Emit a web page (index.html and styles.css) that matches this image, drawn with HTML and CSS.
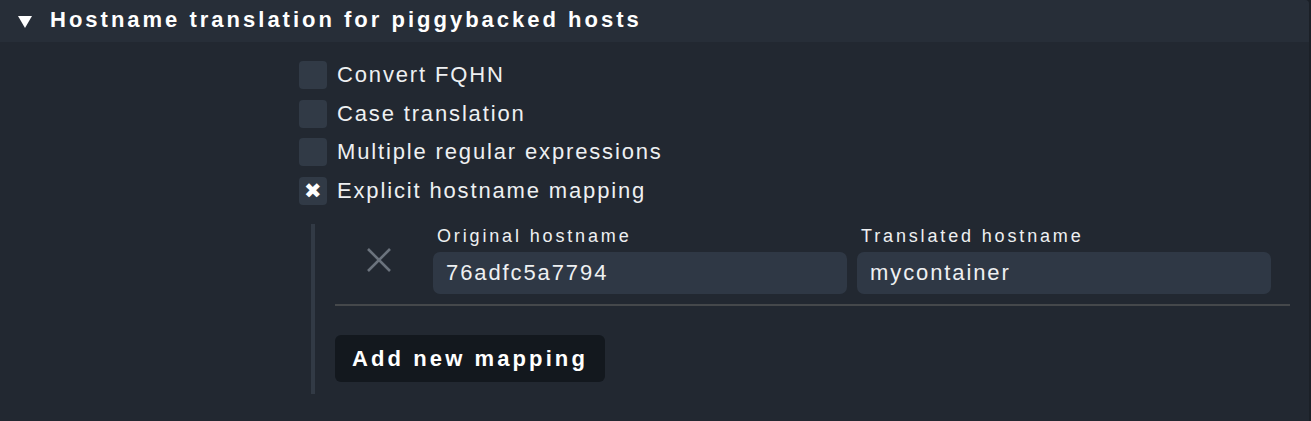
FILE: index.html
```html
<!DOCTYPE html>
<html lang="en">
<head>
    <meta charset="utf-8">
    <title>Hostname translation</title>
    <link rel="stylesheet" href="styles.css">
</head>
<body>

    <div class="panel">
        <div class="panel-head">
            <span class="arrow">
                <svg width="14" height="12" viewBox="0 0 14 12"><polygon points="0,0 14,0 7,12" fill="#fff"/></svg>
            </span>
            <span class="title">Hostname translation for piggybacked hosts</span>
        </div>

        <div class="panel-body">
            <div class="options">
                <label class="check"><span class="box"></span>Convert FQHN</label>
                <label class="check"><span class="box"></span>Case translation</label>
                <label class="check"><span class="box"></span>Multiple regular expressions</label>
                <label class="check"><span class="box checked">&#10006;</span>Explicit hostname mapping</label>

                <div class="mapping">
                    <div class="map-row">
                        <span class="remove">
                            <svg width="26" height="26" viewBox="0 0 26 26">
                                <path d="M2 2 L24 24 M24 2 L2 24" stroke="#6b737d" stroke-width="2.6" fill="none"/>
                            </svg>
                        </span>
                        <div class="field">
                            <span class="field-label">Original hostname</span>
                            <input class="field-input" value="76adfc5a7794">
                        </div>
                        <div class="field">
                            <span class="field-label">Translated hostname</span>
                            <input class="field-input" value="mycontainer">
                        </div>
                    </div>
                    <button class="add-button">Add new mapping</button>
                </div>
            </div>
        </div>
    </div>

</body>
</html>
```

FILE: styles.css
```css
body {
    margin: 0;
    background-color: #1b2027;
    font-family: 'Liberation Sans', Arial, sans-serif;
    color: #eef0f2;
    overflow: hidden;
}

.panel {
    width: 1309px;
    height: 421px;
    background-color: #222831;
    border-top-right-radius: 4px;
}

.panel-head {
    height: 42px;
    background-color: #272e38;
    display: flex;
    align-items: center;
    border-top-right-radius: 4px;
}

.arrow {
    display: flex;
    margin-left: 18px;
    width: 32px;
    margin-top: 1px;
}

.title {
    font-family: 'Liberation Sans', Arial, sans-serif;
    font-weight: bold;
    font-size: 22px;
    letter-spacing: 3px;
    color: #fff;
    margin-top: -2px;
}

.panel-body {
    padding: 19px 0 0 299px;
}

.options {
    display: flex;
    flex-direction: column;
}

.check {
    display: flex;
    align-items: center;
    height: 28px;
    margin-bottom: 10.5px;
    font-size: 22px;
    letter-spacing: 1.85px;
    color: #eef0f2;
}

.box {
    width: 28px;
    height: 28px;
    border-radius: 4px;
    background-color: #313a46;
    margin-right: 10px;
    display: flex;
    align-items: center;
    justify-content: center;
    font-size: 21px;
    color: #fff;
    letter-spacing: 0;
}

.mapping {
    margin: 9px 0 0 12px;
    border-left: 4px solid #323a45;
    padding: 3px 0 12px 20px;
    width: 955px;
}

.map-row {
    display: flex;
    align-items: flex-start;
    border-bottom: 2px solid #45484b;
    padding-bottom: 10px;
}

.remove {
    width: 98px;
    display: flex;
    padding: 20px 0 0 31px;
    box-sizing: border-box;
}

.field {
    display: flex;
    flex-direction: column;
    margin-right: 10px;
}

.field-label {
    font-family: 'Liberation Sans', Arial, sans-serif;
    font-size: 18px;
    letter-spacing: 2.85px;
    color: #eef0f2;
    height: 25px;
    padding-left: 4px;
    margin-top: -1px;
}

.field-input {
    width: 414px;
    height: 42px;
    box-sizing: border-box;
    background-color: #2f3845;
    border: none;
    border-radius: 7px;
    padding: 0 13px;
    margin-top: 1px;
    font-family: 'Liberation Sans', Arial, sans-serif;
    font-size: 22px;
    letter-spacing: 1.9px;
    color: #eef0f2;
}

.add-button {
    margin-top: 29px;
    background-color: #13181e;
    color: #fff;
    border: none;
    border-radius: 6px;
    height: 47px;
    padding: 0 17px;
    font-family: 'Liberation Sans', Arial, sans-serif;
    font-weight: bold;
    font-size: 22px;
    letter-spacing: 3.1px;
}
```
